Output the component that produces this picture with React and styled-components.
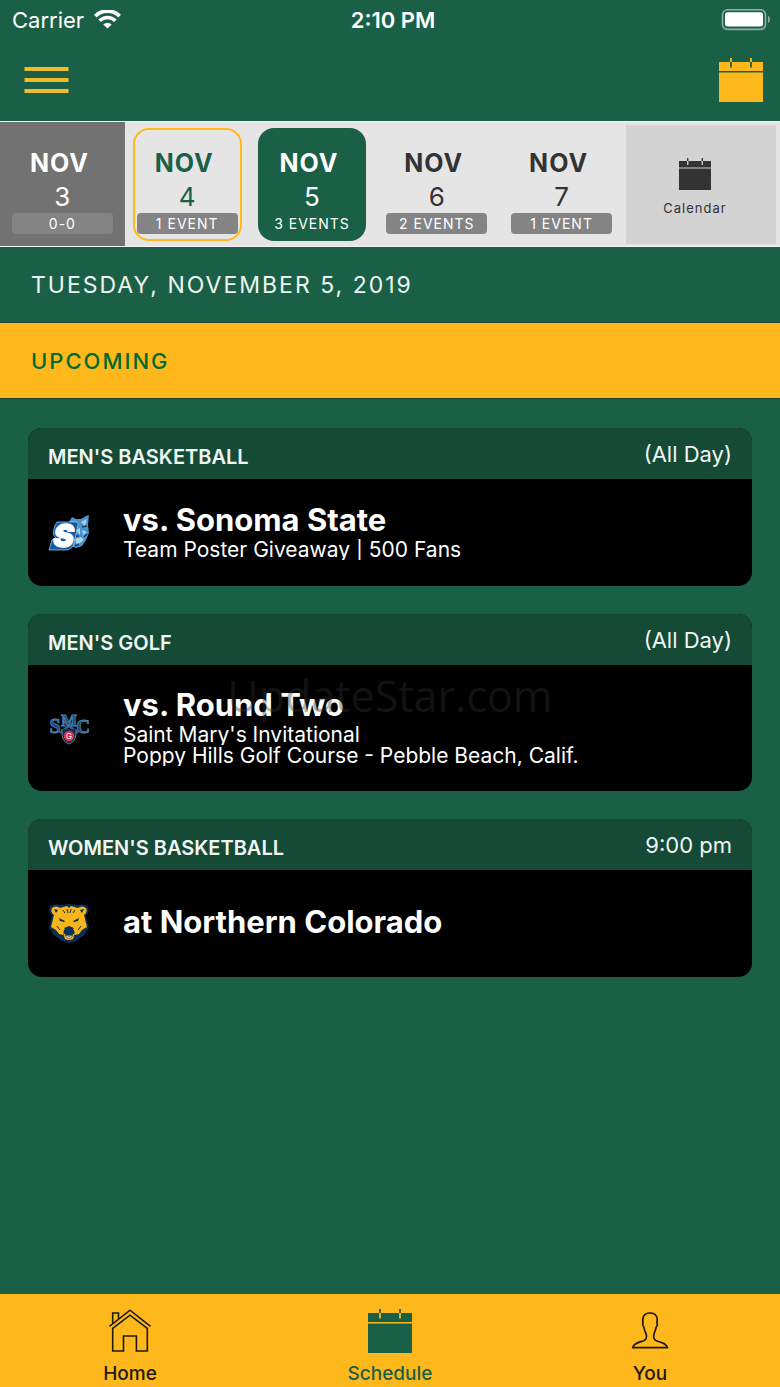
import React, { Component } from 'react';
import styled, { createGlobalStyle } from 'styled-components';

const GREEN = '#1a6047';
const GOLD = '#ffb81c';

const GlobalStyle = createGlobalStyle`
    * {
        box-sizing: border-box;
    }

    body {
        margin: 0;
        background: ${GREEN};
        font-family: Inter, "Liberation Sans", sans-serif;
        color: #fff;
    }

    h1, h2, h3, p, ul {
        margin: 0;
        padding: 0;
    }

    button {
        margin: 0;
        padding: 0;
        border: 0;
        background: none;
        color: inherit;
        font: inherit;
        cursor: pointer;
    }
`

const Screen = styled.div`
    display: flex;
    flex-direction: column;
    min-height: 100vh;
`

const StatusBar = styled.div`
    display: grid;
    grid-template-columns: 1fr auto 1fr;
    align-items: center;
    height: 40px;
    padding: 0 10px 0 12px;
    font-size: 22px;
`

const Carrier = styled.span`
    display: flex;
    align-items: center;
    gap: 10px;
`

const Clock = styled.span`
    padding-left: 4px;
    font-weight: 600;
`

const Battery = styled.span`
    display: flex;
    justify-content: flex-end;
`

const NavBar = styled.header`
    display: flex;
    justify-content: space-between;
    align-items: center;
    height: 81px;
    padding: 0 17px 2px 24px;
`

const IconButton = styled.button`
    display: flex;
    color: ${GOLD};
`

const DayStrip = styled.nav`
    display: flex;
    height: 126px;
    background: #e5e5e5;
    border-top: 1px solid #f4f4f4;
    border-bottom: 1px solid #f4f4f4;
`

const Day = styled.button`
    flex: 0 0 16%;
    display: flex;
    padding: 6px 8px 5px;
    background: ${props => props.$kind === 'past' ? '#727272' : 'transparent'};
    color: ${props => ({ past: '#fff', today: GREEN, selected: '#fff' })[props.$kind] || '#333'};
`

const DayBox = styled.span`
    flex: 1;
    display: flex;
    flex-direction: column;
    align-items: center;
    padding-top: 16px;
    border: 2px solid ${props => ({ today: GOLD, selected: GREEN })[props.$kind] || 'transparent'};
    border-radius: 16px;
    background: ${props => props.$kind === 'selected' ? GREEN : 'transparent'};
`

const Month = styled.span`
    padding-right: 6px;
    font-size: 25px;
    font-weight: 700;
    line-height: 34px;
    letter-spacing: 1px;
`

const DayNumber = styled.span`
    font-size: 26px;
    line-height: 33px;
`

const EventCount = styled.span`
    align-self: stretch;
    margin: 0 2px;
    border-radius: 4px;
    background: ${props => props.$kind === 'selected' ? 'transparent' : '#848484'};
    color: #fff;
    font-size: 14px;
    line-height: 21px;
    letter-spacing: 1px;
    text-align: center;
    white-space: nowrap;
`

const CalendarButton = styled.button`
    flex: 1;
    display: flex;
    flex-direction: column;
    align-items: center;
    justify-content: center;
    gap: 8px;
    margin: 3px 4px 2px 2px;
    padding: 6px 12px 0 0;
    background: #d3d3d3;
    color: #333;
    font-size: 13px;
    line-height: 20px;
    letter-spacing: 1px;
`

const SectionBar = styled.h2`
    height: 76px;
    padding: 0 31px;
    border-bottom: 1px solid #23402f;
    background: ${props => props.$gold ? GOLD : GREEN};
    color: ${props => props.$gold ? '#006b2f' : '#eef5f1'};
    font-size: ${props => props.$gold ? 22 : 23}px;
    font-weight: ${props => props.$gold ? 500 : 400};
    line-height: 76px;
    letter-spacing: 2px;
`

const Events = styled.main`
    position: relative;
    flex: 1;
    display: flex;
    flex-direction: column;
    gap: 28px;
    padding: 29px 28px;
`

const Card = styled.article`
    overflow: hidden;
    border-radius: 14px;
    background: #000;
`

const CardHeader = styled.div`
    display: flex;
    justify-content: space-between;
    align-items: center;
    height: 51px;
    padding: 0 20px;
    background: #154a37;
`

const Sport = styled.h3`
    padding-top: 6px;
    font-size: 20px;
    font-weight: 600;
    color: #f0f6f3;
`

const Time = styled.span`
    font-size: 22px;
    color: #f0f6f3;
`

const CardBody = styled.div`
    display: flex;
    align-items: center;
    gap: 33px;
    min-height: 107px;
    padding: 21px 20px;
`

const CardText = styled.div`
    padding-bottom: 4px;
`

const Opponent = styled.p`
    font-size: 31px;
    font-weight: 700;
    line-height: 38px;
`

// tight lines, so descenders are trimmed
const Detail = styled.p`
    overflow: hidden;
    font-size: 21px;
    line-height: 21px;
`

const Watermark = styled.span`
    position: absolute;
    top: 269px;
    left: 0;
    right: 0;
    color: rgba(50, 50, 50, 0.4);
    font-family: "Open Sans", sans-serif;
    font-size: 43px;
    line-height: 56px;
    text-align: center;
    pointer-events: none;
`

const TabBar = styled.nav`
    display: grid;
    grid-template-columns: repeat(3, 1fr);
    height: 93px;
    background: ${GOLD};
`

const Tab = styled.a`
    display: flex;
    flex-direction: column;
    align-items: center;
    gap: 9px;
    padding-top: 15px;
    color: ${props => props.$active ? GREEN : '#1d1a10'};
    font-size: 19px;
    font-weight: 500;
    line-height: 24px;
    text-decoration: none;
`

const WifiIcon = () => (
    <svg width="27" height="20" viewBox="0 0 27 20" fill="none" stroke="#fff">
        <path d="M1.3 6.1A17.3 17.3 0 0 1 25.7 6.1" strokeWidth="3.8" />
        <path d="M5.6 10.8A11.2 11.2 0 0 1 21.4 10.8" strokeWidth="3.6" />
        <path d="M13.5 18.6L9.3 14.4A6 6 0 0 1 17.7 14.4Z" fill="#fff" stroke="none" />
    </svg>
)

const BatteryIcon = () => (
    <svg width="49" height="22" viewBox="0 0 49 22">
        <rect x="1.5" y="0.8" width="43" height="19.6" rx="5" fill="none" stroke="#8eb0a3" strokeWidth="1.6" />
        <rect x="4" y="3.2" width="38" height="14.4" rx="2.5" fill="#fff" />
        <path d="M47 6.5Q49 8 49 10.5T47 14Z" fill="#8eb0a3" />
    </svg>
)

const MenuIcon = () => (
    <svg width="45" height="28" viewBox="0 0 45 28" stroke="#f0bb2c" strokeWidth="3.8">
        <path d="M0.5 3H44.5M0.5 14H44.5M0.5 25H44.5" />
    </svg>
)

// the pegs are solid above the page and cut out of it below
const CalendarIcon = ({ size, gap }) => (
    <svg width={size} height={size} viewBox="0 0 44 44">
        <path d="M0 4H44V13H0ZM0 14.6H44V44H0Z" fill="currentColor" />
        <path d="M12 4V9.5M32 4V9.5" stroke={gap} strokeWidth="1.8" />
        <path d="M12 0V4M32 0V4" stroke="currentColor" strokeWidth="1.8" />
    </svg>
)

const HomeIcon = () => (
    <svg width="44" height="44" viewBox="0 0 44 44" fill="none" stroke="currentColor" strokeWidth="1.6">
        <path d="M1.5 17.4L22 1.2L42.5 17.4" />
        <path d="M4.7 14.2V4H10.5V9.8" />
        <path d="M4.7 19.4L22 6.2L39.3 19.4V42H28.4V27H15.5V42H4.7Z" />
    </svg>
)

const PersonIcon = () => (
    <svg width="44" height="44" viewBox="0 0 44 44" fill="none" stroke="currentColor" strokeWidth="1.7" strokeLinejoin="round">
        <path d="M4.6 38.6C5.6 34.6 10 33.6 15 32C18 31 19 29.4 18.4 26C17.6 23 16.2 21.4 15.8 18C14.6 16.6 14.4 15 14.9 13.4C14.6 11 14.4 9.6 15.4 7.6C16.8 4.8 19.4 4 22 4C25.4 4 28.2 5.6 29 8.6C29.4 10 29.2 12 29 13.4C29.6 15 29.2 17 28.2 18C27.6 21.6 26.4 23 25.8 26C25.2 29.4 26 31 29 32C34 33.6 38.6 34.6 39.4 38.6Z" />
    </svg>
)

const SonomaLogo = () => (
    <svg width="42" height="40" viewBox="0 0 42 40">
        <path d="M21 9L24 4L28 6L33 6L38 3L41 2L40 12L41 20L38 27L34 33L28 35L23 33Z" fill="#4c93cb" />
        <path d="M24 8L29 10L26 13ZM33 9L39 6L37 13ZM28 17L32 15L32 22ZM34 17L39 19L35 22ZM27 26L33 24L36 27L29 32Z" fill="#a6d5f2" />
        <path d="M24 14L29 15M34 14L39 13M27 23L31 23M36 24L39 21M27 33L31 31" stroke="#123b6b" strokeWidth="1.4" />
        <path d="M9 9H28Q31 9 30 12L26 30Q24 37 18 37H1L4 27L8 25Q4 22 6 16Q7 11 9 9Z" fill="#1559a0" stroke="#8cc4ec" strokeWidth="0.8" />
        <text x="15.5" y="34" textAnchor="middle" fontFamily="Inter, sans-serif" fontWeight="900" fontStyle="italic" fontSize="31" fill="#fff" stroke="#fff" strokeWidth="1.4">S</text>
    </svg>
)

const SaintMarysLogo = () => (
    <svg width="42" height="40" viewBox="0 0 42 40" fontFamily="Liberation Serif, serif" textAnchor="middle">
        <path d="M15 13L30 25M27 13L12 25" stroke="#2f6597" strokeWidth="2.4" />
        <path d="M14 21V27Q15 34 21 36Q27 34 28 27V21" fill="#102e4d" stroke="#5a7d9c" />
        <g fill="#1a4676" stroke="#4f80aa" strokeWidth="0.9" fontWeight="700">
            <text x="7" y="24.5" fontSize="20">S</text>
            <text x="35" y="24.5" fontSize="19">C</text>
            <text x="21" y="17.5" fontSize="17">M</text>
        </g>
        <circle cx="21" cy="28" r="5.2" fill="#dd3347" />
        <text x="21" y="31" fontSize="8" fontFamily="Inter, sans-serif" fill="#fff">G</text>
    </svg>
)

const BearLogo = () => (
    <svg width="42" height="40" viewBox="0 0 42 40">
        <path d="M2 3Q6 -1 12 1L21 0L30 1Q36 -1 40 3Q42 8 38 12L41 24L36 31L28 37L21 39L14 37L6 31L1 24L4 12Q0 8 2 3Z" fill="#0d2f55" />
        <path d="M4 4Q8 1 12 4L19 2L21 4L23 2L30 4Q34 1 38 4Q40 8 36 11L39 23L34 26L31 30L27 31L26 26L21 23L16 26L15 31L11 30L8 26L3 23L6 11Q2 8 4 4Z" fill="#f7b51c" />
        <path d="M6 5L10 6L8 9ZM36 5L32 6L34 9ZM11 14L17 17L16 18L12 17ZM31 14L25 17L26 18L30 17ZM16 24L21 22L26 24L23 28H19Z" fill="#0d2f55" />
        <path d="M19 5L20 9M23 5L22 9M15 6L17 9M27 6L25 9M9 22L12 26M33 22L30 26" stroke="#0d2f55" fill="none" />
        <path d="M15 29Q21 34 27 29L25 35Q21 37 17 35Z" fill="#f7b51c" />
        <path d="M17 31Q21 34 25 31L23 34H19Z" fill="#fff" stroke="#0d2f55" strokeWidth="0.6" />
    </svg>
)

const DAYS = [
    { number: 3, label: '0-0', kind: 'past' },
    { number: 4, label: '1 EVENT', kind: 'today' },
    { number: 5, label: '3 EVENTS', kind: 'selected' },
    { number: 6, label: '2 EVENTS' },
    { number: 7, label: '1 EVENT' }
]

const EVENTS = [
    {
        sport: "MEN'S BASKETBALL",
        time: '(All Day)',
        opponent: 'vs. Sonoma State',
        details: ['Team Poster Giveaway | 500 Fans'],
        logo: <SonomaLogo />
    },
    {
        sport: "MEN'S GOLF",
        time: '(All Day)',
        opponent: 'vs. Round Two',
        details: ["Saint Mary's Invitational", 'Poppy Hills Golf Course - Pebble Beach, Calif.'],
        logo: <SaintMarysLogo />
    },
    {
        sport: "WOMEN'S BASKETBALL",
        time: '9:00 pm',
        opponent: 'at Northern Colorado',
        details: [],
        logo: <BearLogo />
    }
]

class App extends Component {

    makeDay = (day) => {
        return (
            <Day key={day.number} $kind={day.kind}>
                <DayBox $kind={day.kind}>
                    <Month>NOV</Month>
                    <DayNumber>{day.number}</DayNumber>
                    <EventCount $kind={day.kind}>{day.label}</EventCount>
                </DayBox>
            </Day>
        );
    }

    makeEvent = (event) => {
        return (
            <Card key={event.sport}>
                <CardHeader>
                    <Sport>{event.sport}</Sport>
                    <Time>{event.time}</Time>
                </CardHeader>
                <CardBody>
                    {event.logo}
                    <CardText>
                        <Opponent>{event.opponent}</Opponent>
                        {event.details.map(line => <Detail key={line}>{line}</Detail>)}
                    </CardText>
                </CardBody>
            </Card>
        );
    }

    render() {
        return (
            <Screen>
                <GlobalStyle />
                <StatusBar>
                    <Carrier>Carrier <WifiIcon /></Carrier>
                    <Clock>2:10 PM</Clock>
                    <Battery><BatteryIcon /></Battery>
                </StatusBar>
                <NavBar>
                    <IconButton aria-label="Menu"><MenuIcon /></IconButton>
                    <IconButton aria-label="Open calendar"><CalendarIcon size={44} gap={GREEN} /></IconButton>
                </NavBar>
                <DayStrip>
                    {DAYS.map(this.makeDay)}
                    <CalendarButton>
                        <CalendarIcon size={32} gap="#d3d3d3" />
                        <span>Calendar</span>
                    </CalendarButton>
                </DayStrip>
                <SectionBar>TUESDAY, NOVEMBER 5, 2019</SectionBar>
                <SectionBar $gold>UPCOMING</SectionBar>
                <Events>
                    {EVENTS.map(this.makeEvent)}
                    <Watermark>UpdateStar.com</Watermark>
                </Events>
                <TabBar>
                    <Tab href="#home"><HomeIcon />Home</Tab>
                    <Tab href="#schedule" $active><CalendarIcon size={44} gap={GOLD} />Schedule</Tab>
                    <Tab href="#you"><PersonIcon />You</Tab>
                </TabBar>
            </Screen>
        );
    }
}

export default App;
